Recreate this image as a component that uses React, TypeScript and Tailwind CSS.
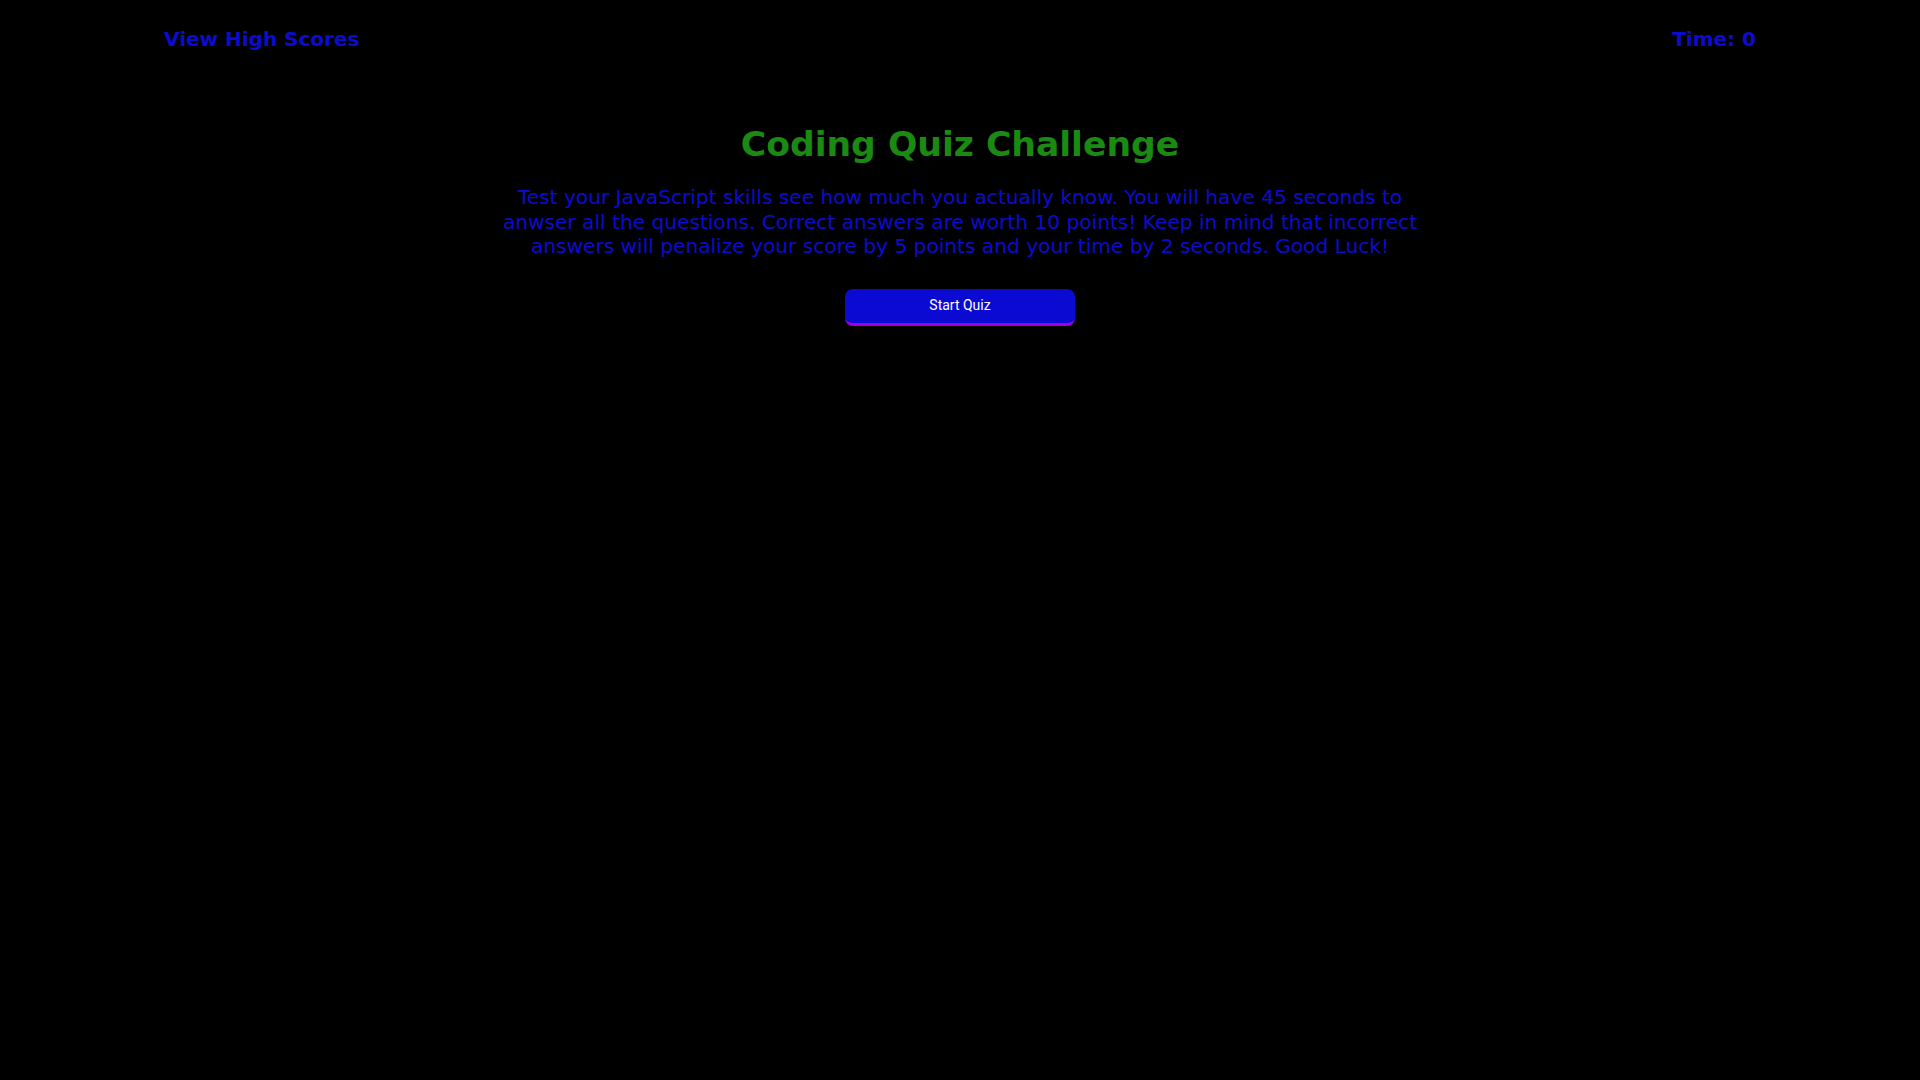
export default function App() {
  return (
    <div className="min-h-screen w-full bg-black font-['DejaVu_Sans',Verdana,sans-serif]">
      <header className="flex items-center justify-between px-[164px] pt-[26px]">
        <a className="text-[20px] font-bold text-[#0c0cd0] leading-[26px] cursor-pointer">View High Scores</a>
        <div className="text-[20px] font-bold text-[#0c0cd0] leading-[26px]">Time: 0</div>
      </header>

      <main className="flex flex-col items-center pt-[68px]">
        <h1 className="text-[34.6px] font-bold text-[#1a8a12] leading-[48px]">Coding Quiz Challenge</h1>
        <p className="mt-[17px] w-[920px] text-center text-[20.15px] leading-[24.5px] text-[#0c0cd0]">
          Test your JavaScript skills see how much you actually know. You will have 45 seconds to anwser all the
          questions. Correct answers are worth 10 points! Keep in mind that incorrect answers will penalize your
          score by 5 points and your time by 2 seconds. Good Luck!
        </p>
        <button className="mt-[30px] h-[37px] w-[230px] rounded-[8px] border-b-[3px] border-[#a000e0] bg-[#0a0ad2] font-['Roboto',Arial,sans-serif] text-[14px] text-white">
          Start Quiz
        </button>
      </main>
    </div>
  );
}
